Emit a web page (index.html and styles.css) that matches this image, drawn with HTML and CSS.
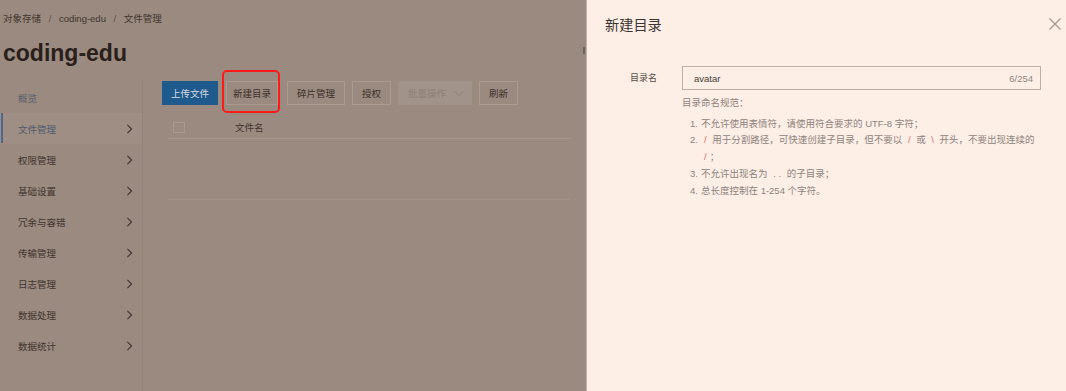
FILE: index.html
```html
<!DOCTYPE html>
<html lang="zh-CN">
<head>
<meta charset="utf-8">
<link rel="stylesheet" href="styles.css">
</head>
<body>
<div class="page">
  <div class="main">
    <div class="crumbs">对象存储 <span class="sep">/</span> coding-edu <span class="sep">/</span> 文件管理</div>
    <div class="title-row">
      <h1 class="title">coding-edu</h1>
      <span class="edge-mark"></span>
    </div>
    <div class="body">
      <nav class="side">
        <div class="nav-item link">概览</div>
        <div class="nav-item active">文件管理<svg class="chev" viewBox="0 0 8 12"><path d="M1.5 1 L6.5 6 L1.5 11" /></svg></div>
        <div class="nav-item">权限管理<svg class="chev" viewBox="0 0 8 12"><path d="M1.5 1 L6.5 6 L1.5 11" /></svg></div>
        <div class="nav-item">基础设置<svg class="chev" viewBox="0 0 8 12"><path d="M1.5 1 L6.5 6 L1.5 11" /></svg></div>
        <div class="nav-item">冗余与容错<svg class="chev" viewBox="0 0 8 12"><path d="M1.5 1 L6.5 6 L1.5 11" /></svg></div>
        <div class="nav-item">传输管理<svg class="chev" viewBox="0 0 8 12"><path d="M1.5 1 L6.5 6 L1.5 11" /></svg></div>
        <div class="nav-item">日志管理<svg class="chev" viewBox="0 0 8 12"><path d="M1.5 1 L6.5 6 L1.5 11" /></svg></div>
        <div class="nav-item">数据处理<svg class="chev" viewBox="0 0 8 12"><path d="M1.5 1 L6.5 6 L1.5 11" /></svg></div>
        <div class="nav-item">数据统计<svg class="chev" viewBox="0 0 8 12"><path d="M1.5 1 L6.5 6 L1.5 11" /></svg></div>
      </nav>
      <section class="content">
        <div class="toolbar">
          <button class="btn primary">上传文件</button>
          <span class="highlight"><button class="btn tight">新建目录</button></span>
          <button class="btn">碎片管理</button>
          <button class="btn">授权</button>
          <button class="btn disabled">批量操作<svg class="down" viewBox="0 0 12 8"><path d="M1 1.5 L6 6.5 L11 1.5" /></svg></button>
          <button class="btn">刷新</button>
        </div>
        <div class="table">
          <div class="thead">
            <div class="cell check"><span class="box"></span></div>
            <div class="cell name">文件名</div>
          </div>
          <div class="empty-row"></div>
        </div>
      </section>
    </div>
  </div>
  <aside class="panel">
    <div class="panel-head">
      <h2 class="panel-title">新建目录</h2>
      <svg class="close" viewBox="0 0 12 12"><path d="M0.5 0.5 L11.5 11.5 M11.5 0.5 L0.5 11.5" /></svg>
    </div>
    <div class="form-row">
      <label class="label">目录名</label>
      <div class="field">
        <div class="input"><span class="value">avatar</span><span class="count">6/254</span></div>
        <div class="help">
          <div class="help-title">目录命名规范：</div>
          <ol class="rules">
            <li><span class="num">1.</span><span>不允许使用表情符，请使用符合要求的 UTF-8 字符；</span></li>
            <li><span class="num">2.</span><span><code class="red">/</code> 用于分割路径，可快速创建子目录，但不要以 <code class="red">/</code> 或 <code class="red">\</code> 开头，不要出现连续的 <code class="red">/</code>；</span></li>
            <li><span class="num">3.</span><span>不允许出现名为 <code class="grey">. .</code> 的子目录；</span></li>
            <li><span class="num">4.</span><span>总长度控制在 1-254 个字符。</span></li>
          </ol>
        </div>
      </div>
    </div>
  </aside>
</div>
</body>
</html>
```
FILE: styles.css
```css
* { box-sizing: border-box; }
html, body {
  margin: 0;
  padding: 0;
  width: 1066px;
  height: 391px;
  overflow: hidden;
  background: #9b8a80;
  font-family: "Liberation Sans", "Noto Sans CJK SC", sans-serif;
}
.page {
  display: flex;
  height: 391px;
}
.main {
  width: 587px;
  flex: none;
  display: flex;
  flex-direction: column;
  color: #3e332d;
}
.crumbs {
  margin-top: 12px;
  padding-left: 3px;
  font-size: 9.5px;
  line-height: 14px;
  color: #41362f;
}
.crumbs .sep { margin: 0 5px; color: #5a4e47; }
.title-row {
  display: flex;
  justify-content: space-between;
  align-items: center;
  margin-top: 12px;
  height: 30px;
}
.title {
  margin: 0 0 0 3px;
  font-size: 23px;
  font-weight: bold;
  line-height: 30px;
  color: #2a201b;
}
.edge-mark {
  width: 2px;
  height: 7px;
  margin-right: 2px;
  margin-top: -6px;
  background: #6e625b;
}
.body {
  flex: 1;
  display: flex;
  margin-top: 12px;
}
.side {
  width: 143px;
  flex: none;
  border-right: 1px solid #948379;
  padding-top: 2px;
}
.nav-item {
  position: relative;
  height: 31px;
  display: flex;
  align-items: center;
  justify-content: space-between;
  padding: 0 9px 0 18px;
  font-size: 9.5px;
  color: #3f342e;
}
.nav-item.link { color: #556070; }
.nav-item.active {
  color: #4f5b6c;
  background: rgba(255, 255, 255, 0.035);
}
.nav-item.active::before {
  content: "";
  position: absolute;
  left: 1px;
  top: 0;
  bottom: 1px;
  width: 2px;
  background: #4a6791;
}
.chev {
  width: 7px;
  height: 10px;
  fill: none;
  stroke: #3d322c;
  stroke-width: 1.3;
}
.content {
  flex: 1;
  padding: 1px 16px 0 19px;
}
.toolbar {
  display: flex;
  align-items: center;
  gap: 7px;
}
.btn {
  height: 24px;
  padding: 0 9px;
  border: 1px solid #aa9a90;
  background: transparent;
  font-family: inherit;
  font-size: 9.5px;
  color: #3b312b;
  display: flex;
  align-items: center;
  gap: 8px;
  white-space: nowrap;
}
.btn.tight { padding: 0 6px; }
.btn.primary {
  background: #1f5a8d;
  border-color: #1f5a8d;
  color: #d9dbe2;
  padding: 0 8px;
}
.btn.disabled {
  background: #a2938a;
  border-color: #a2938a;
  color: #8c7f78;
  padding: 0 7px 0 9px;
}
.down {
  width: 10px;
  height: 7px;
  fill: none;
  stroke: #8c7f78;
  stroke-width: 1.2;
}
.highlight {
  position: relative;
  display: flex;
  margin-left: 1px;
  margin-right: 2px;
}
.highlight::after {
  content: "";
  position: absolute;
  left: -4px;
  right: -2px;
  top: -11px;
  bottom: -8px;
  border: 2px solid #ff1a1a;
  border-radius: 5px;
}
.table {
  margin-top: 14px;
  margin-left: 6px;
  width: 402px;
}
.thead {
  display: flex;
  align-items: center;
  height: 20px;
  border-bottom: 1px solid #a7978d;
}
.cell.check {
  width: 67px;
  padding-left: 5px;
  display: flex;
  align-items: center;
}
.box {
  width: 12px;
  height: 11px;
  border: 1px solid #aa9a91;
  margin-top: -3px;
}
.cell.name {
  font-size: 9.5px;
  color: #3f342e;
  margin-top: -3px;
}
.empty-row {
  height: 61px;
  border-bottom: 1px solid #a39389;
}
.panel {
  flex: 1;
  background: #fdeee6;
  box-shadow: -1px 0 0 #c3b0a4;
  padding: 0 5px 0 18px;
  position: relative;
}
.panel-head {
  display: flex;
  justify-content: space-between;
  align-items: center;
  height: 46px;
}
.panel-title {
  margin: 0;
  font-size: 14.2px;
  font-weight: normal;
  color: #3c3430;
  margin-top: 1px;
}
.close {
  width: 12px;
  height: 12px;
  fill: none;
  stroke: #a89891;
  stroke-width: 1.3;
  margin-top: 1px;
}
.form-row {
  display: flex;
  margin-top: 20px;
}
.label {
  width: 52px;
  flex: none;
  text-align: right;
  font-size: 9px;
  line-height: 24px;
  color: #574c46;
}
.field {
  margin-left: 25px;
  width: 359px;
}
.input {
  height: 24px;
  border: 1px solid #bfafa6;
  display: flex;
  justify-content: space-between;
  align-items: center;
  padding: 0 7px 0 11px;
  font-size: 9.5px;
}
.value { color: #463c36; }
.count { color: #8f847e; }
.help {
  font-size: 9.5px;
  color: #8d837d;
  line-height: 16.7px;
}
.help-title { margin-top: 5px; }
.rules {
  list-style: none;
  margin: 4px 0 0 0;
  padding: 0 0 0 8px;
}
.rules li { display: flex; }
.num { width: 11px; flex: none; }
code {
  font-family: inherit;
  padding: 0 3px;
}
code.red { color: #e2706d; }
code.grey { color: #958a84; }
```
